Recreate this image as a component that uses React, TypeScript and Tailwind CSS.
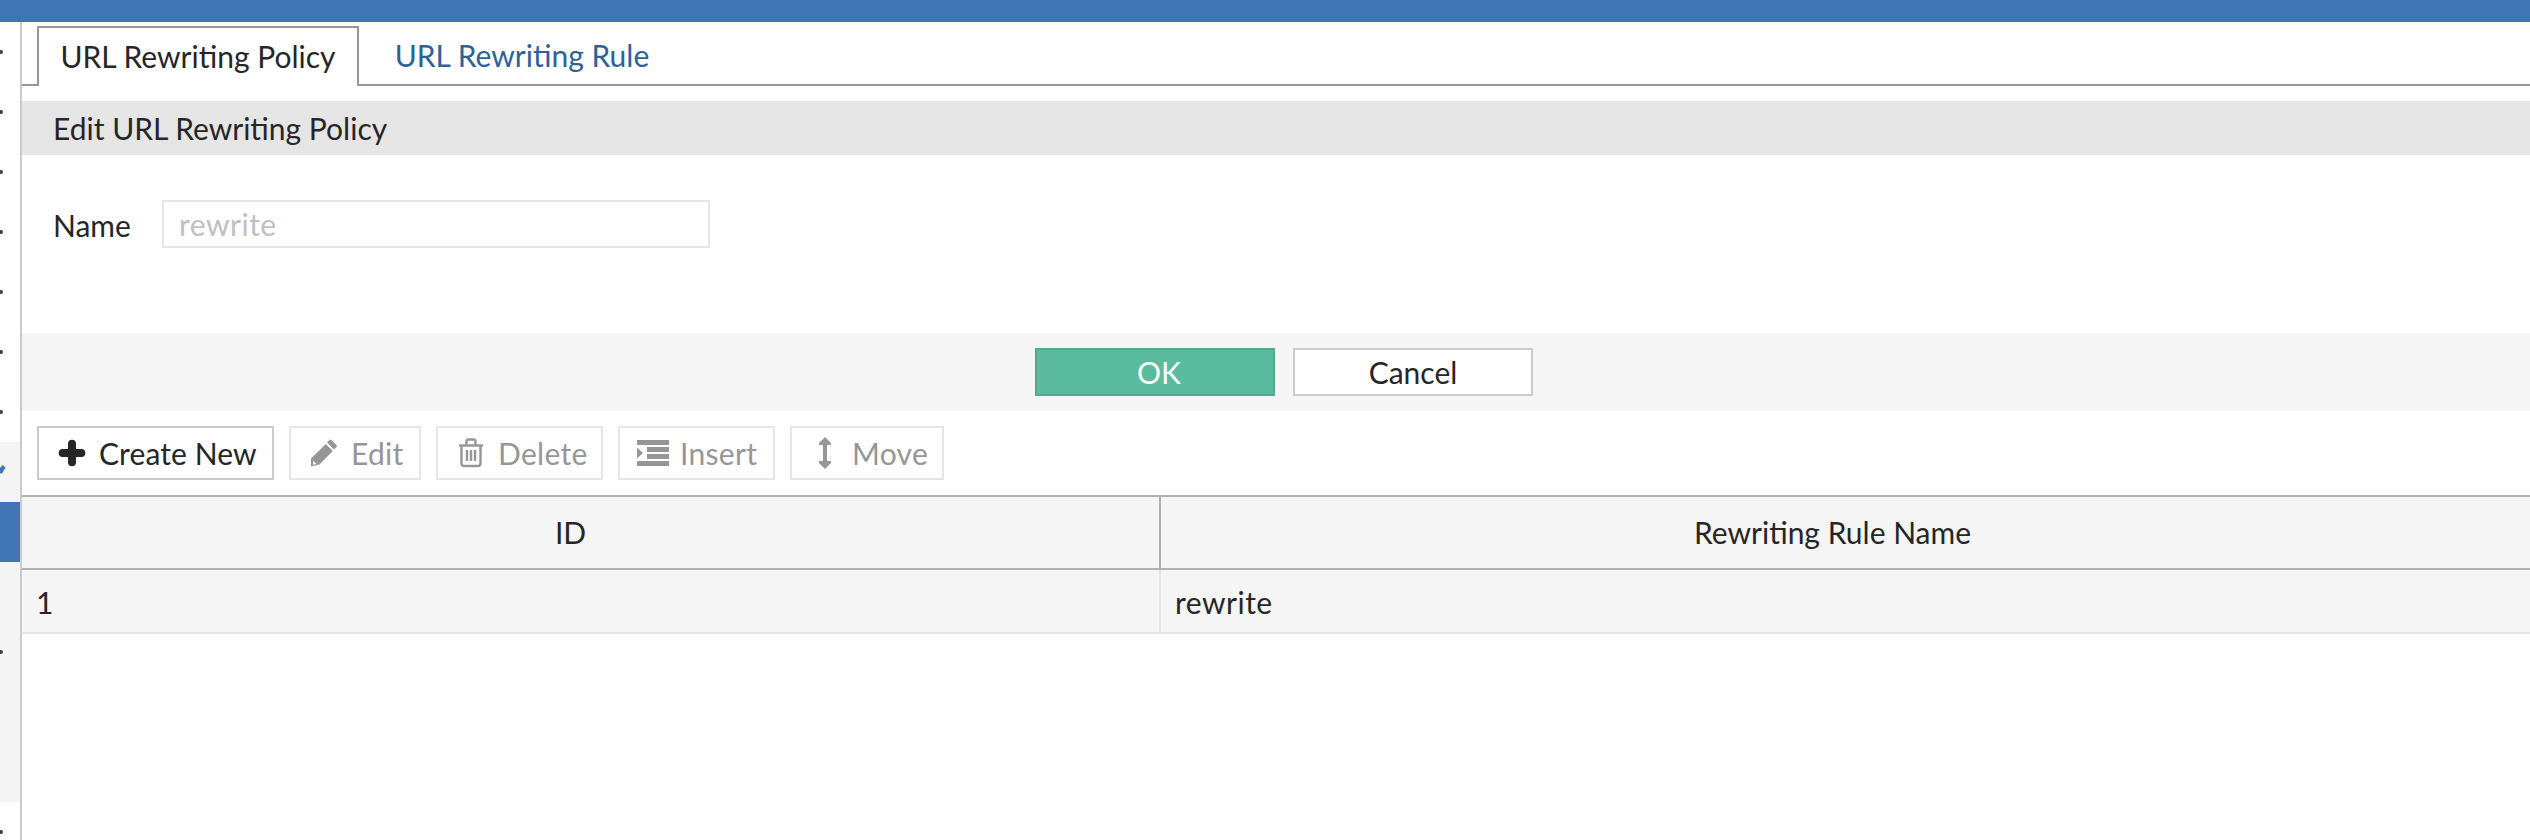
import React from 'react';
import { Plus } from 'lucide-react';

const lato = { fontFamily: 'Lato, sans-serif' };

const PencilIcon = () => (
  <svg width="28" height="28" viewBox="0 0 28 28" fill="#969696">
    <path d="M19.5 1 Q20.5 0 21.5 1 L26.5 6 Q27.5 7 26.5 8 L24 10.5 L17 3.5 Z" />
    <path d="M15.8 5 L22.8 12 L9.5 25.5 L1 27.5 L1 19.5 Z" />
    <path d="M3 21.5 L6.5 25 L3 25.8 Z" fill="#fff" />
  </svg>
);

const TrashIcon = () => (
  <svg width="26" height="30" viewBox="0 0 26 30" fill="none" stroke="#969696" strokeWidth="2.4">
    <path d="M1 7.5 H25" />
    <path d="M8.5 7 V3.5 Q8.5 1.5 10.5 1.5 H15.5 Q17.5 1.5 17.5 3.5 V7" />
    <path d="M3.5 7.5 V25.5 Q3.5 28 6 28 H20 Q22.5 28 22.5 25.5 V7.5" />
    <path d="M9 12 V23 M13 12 V23 M17 12 V23" />
  </svg>
);

const InsertIcon = () => (
  <svg width="32" height="26" viewBox="0 0 32 26" fill="#969696">
    <rect x="0" y="0" width="32" height="5" />
    <rect x="10" y="7" width="22" height="5" />
    <rect x="10" y="14" width="22" height="5" />
    <rect x="0" y="21" width="32" height="5" />
    <path d="M0 7.5 L6 13 L0 18.5 Z" />
  </svg>
);

const MoveIcon = () => (
  <svg width="12" height="32" viewBox="0 0 12 32" fill="#969696">
    <path d="M6 0 L12 6 V8 H8 V24 H12 V26 L6 32 L0 26 V24 H4 V8 H0 V6 Z" />
  </svg>
);

const ToolButton = ({
  label,
  icon,
  width,
  gap,
  pad,
}: {
  label: string;
  icon: React.ReactNode;
  width: string;
  gap: string;
  pad: string;
}) => (
  <button className={`flex h-[54px] items-center border-2 border-[#e5e5e5] bg-white text-[30px] tracking-[0.3px] text-[#969696] ${width} ${gap} ${pad}`}>
    {icon}
    <span>{label}</span>
  </button>
);

const SideRow = ({ tone, children }: { tone: string; children?: React.ReactNode }) => (
  <div className={`flex h-[60px] shrink-0 items-center ${tone}`}>{children}</div>
);

const Dot = () => <span className="block h-[4px] w-[3px] rounded-r-full bg-[#444]" />;

export default function App() {
  return (
    <div className="flex h-[840px] w-[2530px] flex-col overflow-hidden bg-white text-[#262626]" style={lato}>
      <div className="h-[22px] shrink-0 bg-[#4174b4]" />
      <div className="flex min-h-0 flex-1">
        {/* Collapsed nav */}
        <div className="flex w-[22px] shrink-0 flex-col overflow-hidden border-r-2 border-[#cbcbcb]">
          <SideRow tone="bg-white"><Dot /></SideRow>
          <SideRow tone="bg-white"><Dot /></SideRow>
          <SideRow tone="bg-white"><Dot /></SideRow>
          <SideRow tone="bg-white"><Dot /></SideRow>
          <SideRow tone="bg-white"><Dot /></SideRow>
          <SideRow tone="bg-white"><Dot /></SideRow>
          <SideRow tone="bg-white"><Dot /></SideRow>
          <SideRow tone="bg-[#f4f4f4]">
            <svg width="6" height="9" viewBox="0 0 6 9" className="-translate-y-[3px]" fill="#4174b4">
              <path d="M2.5 0 L5.5 2.5 L2 8.5 L0 8.5 L0 3 Z" />
            </svg>
          </SideRow>
          <SideRow tone="bg-[#4174b4]" />
          <SideRow tone="bg-[#f4f4f4]" />
          <SideRow tone="bg-[#f4f4f4]"><Dot /></SideRow>
          <SideRow tone="bg-[#f4f4f4]" />
          <SideRow tone="bg-[#f4f4f4]" />
          <SideRow tone="bg-white"><Dot /></SideRow>
        </div>

        <div className="min-w-0 flex-1">
          {/* Tabs */}
          <div className="flex h-[64px] items-end border-b-2 border-[#969696] pl-[15px] pt-[6px]">
            <div className="-mb-[2px] flex h-[60px] w-[322px] items-center justify-center border-2 border-b-0 border-[#969696] bg-white pb-[2px] text-[30px]">
              URL Rewriting Policy
            </div>
            <div className="flex h-[58px] w-[326px] items-center justify-center text-[30px] text-[#2f6096]">
              URL Rewriting Rule
            </div>
          </div>

          {/* Form */}
          <div className="mt-[15px] flex h-[54px] items-center bg-[#e5e5e5] pl-[31px] text-[30px]">
            Edit URL Rewriting Policy
          </div>
          <div className="flex h-[178px] items-start pl-[31px] pt-[45px]">
            <div className="flex h-[48px] w-[109px] items-center pt-[2px] text-[30px]">Name</div>
            <div className="flex h-[48px] w-[548px] items-center border-2 border-[#e5e5e5] pl-[15px] text-[30px] tracking-[0.5px] text-[#c0c0c0]">
              rewrite
            </div>
          </div>
          <div className="flex h-[78px] items-center justify-center gap-[18px] bg-[#f5f5f5] pl-[16px]">
            <button className="h-[48px] w-[240px] border-2 border-[#50a98c] bg-[#5abb9e] pl-[8px] text-[30px] text-white">OK</button>
            <button className="h-[48px] w-[240px] border-2 border-[#cbcbcb] bg-white text-[30px]">Cancel</button>
          </div>

          {/* Toolbar */}
          <div className="flex h-[84px] items-start gap-[15px] pl-[15px] pt-[15px]">
            <button className="flex h-[54px] w-[237px] items-center gap-[11px] border-2 border-[#cbcbcb] bg-white pl-[17px] text-[30px] tracking-[0.1px]">
              <Plus size={32} strokeWidth={6} color="#262626" />
              <span>Create New</span>
            </button>
            <ToolButton label="Edit" icon={<PencilIcon />} width="w-[132px]" gap="gap-[13px]" pad="pl-[19px]" />
            <ToolButton label="Delete" icon={<TrashIcon />} width="w-[167px]" gap="gap-[14px]" pad="pl-[20px]" />
            <ToolButton label="Insert" icon={<InsertIcon />} width="w-[157px]" gap="gap-[11px]" pad="pl-[17px]" />
            <ToolButton label="Move" icon={<MoveIcon />} width="w-[154px]" gap="gap-[21px]" pad="pl-[27px]" />
          </div>

          {/* Table */}
          <div className="border-t-2 border-[#b0b0b0] text-[30px]">
            <div className="flex h-[73px] border-b-2 border-[#b0b0b0] bg-[#f5f5f5]">
              <div className="flex w-[1139px] items-center justify-center border-r-2 border-[#b0b0b0] pr-[40px]">ID</div>
              <div className="flex flex-1 items-center justify-center pr-[26px]">Rewriting Rule Name</div>
            </div>
            <div className="flex h-[64px] border-b-2 border-[#e5e5e5] bg-[#f5f5f5]">
              <div className="flex w-[1139px] items-center border-r-2 border-[#e5e5e5] pl-[14px] pt-[2px]">1</div>
              <div className="flex flex-1 items-center pl-[14px] pt-[2px] tracking-[0.5px]">rewrite</div>
            </div>
          </div>
        </div>
      </div>
    </div>
  );
}
